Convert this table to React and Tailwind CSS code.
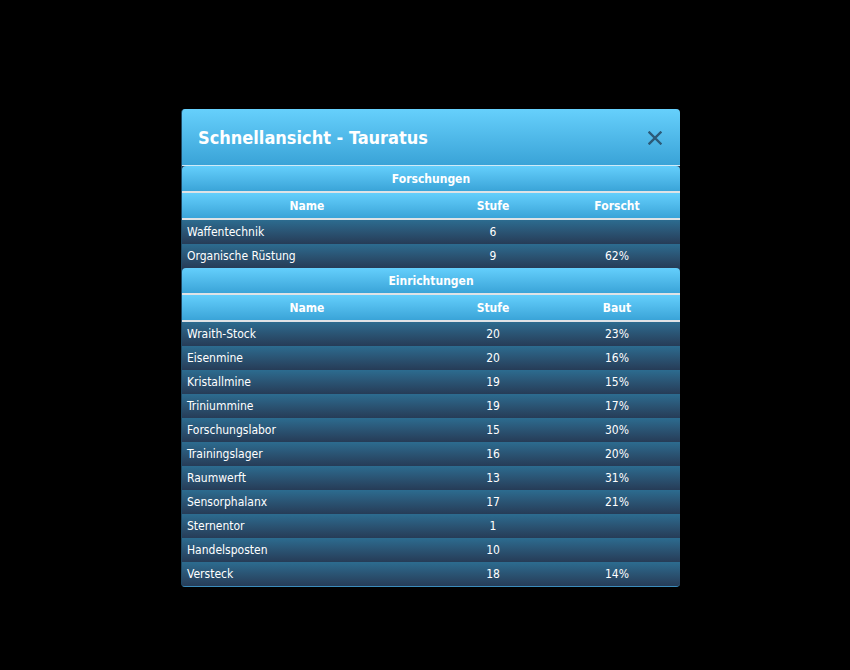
const FORSCHUNGEN = [
  ["Waffentechnik", "6", ""],
  ["Organische Rüstung", "9", "62%"],
];

const EINRICHTUNGEN = [
  ["Wraith-Stock", "20", "23%"],
  ["Eisenmine", "20", "16%"],
  ["Kristallmine", "19", "15%"],
  ["Triniummine", "19", "17%"],
  ["Forschungslabor", "15", "30%"],
  ["Trainingslager", "16", "20%"],
  ["Raumwerft", "13", "31%"],
  ["Sensorphalanx", "17", "21%"],
  ["Sternentor", "1", ""],
  ["Handelsposten", "10", ""],
  ["Versteck", "18", "14%"],
];

function Section({ title, last, rows }) {
  return (
    <div>
      <div className="flex h-[25px] items-center justify-center rounded-t-[4px] bg-gradient-to-b from-[#64cffc] to-[#3aa4d8] text-[12px] font-bold text-white">
        {title}
      </div>
      <div className="h-[2px] bg-[#dfe3e6]" />
      <div className="grid h-[25px] grid-cols-[250px_122px_1fr] items-center bg-gradient-to-b from-[#64cffc] to-[#3aa4d8] text-center text-[12px] font-bold text-white">
        <div>Name</div>
        <div>Stufe</div>
        <div>{last}</div>
      </div>
      <div className="h-[2px] bg-[#dfe3e6]" />
      {rows.map(([name, lvl, pct]) => (
        <div
          key={name}
          className="grid h-[24px] grid-cols-[250px_122px_1fr] items-center bg-gradient-to-b from-[#2c6c90] to-[#263c57] text-[12px] text-white"
        >
          <div className="pl-[5px]">{name}</div>
          <div className="text-center">{lvl}</div>
          <div className="text-center">{pct}</div>
        </div>
      ))}
    </div>
  );
}

export default function App() {
  return (
    <div
      className="flex h-[670px] w-[850px] bg-black pl-[181px] pt-[109px]"
      style={{ fontFamily: '"DejaVu Sans Condensed", "DejaVu Sans", sans-serif' }}
    >
      <div className="h-fit w-[499px] overflow-hidden rounded-[4px] border-l border-b border-[#1f4a66] border-b-[#3b8cbc] bg-[#263c57]">
        <div className="flex h-[56px] items-center justify-between bg-gradient-to-b from-[#66d0fc] to-[#39a3d7] pl-[16px] pr-[18px]">
          <h1 className="text-[18px] font-bold text-white">Schnellansicht - Tauratus</h1>
          <svg width="14" height="14" viewBox="0 0 14 14" className="mt-[2px]">
            <path d="M1.5 1.5 L12.5 12.5 M12.5 1.5 L1.5 12.5" stroke="#2c5a78" strokeWidth="2.4" strokeLinecap="square" />
          </svg>
        </div>
        <div className="h-px bg-[#cfeaf7]" />
        <Section title="Forschungen" last="Forscht" rows={FORSCHUNGEN} />
        <Section title="Einrichtungen" last="Baut" rows={EINRICHTUNGEN} />
      </div>
    </div>
  );
}
